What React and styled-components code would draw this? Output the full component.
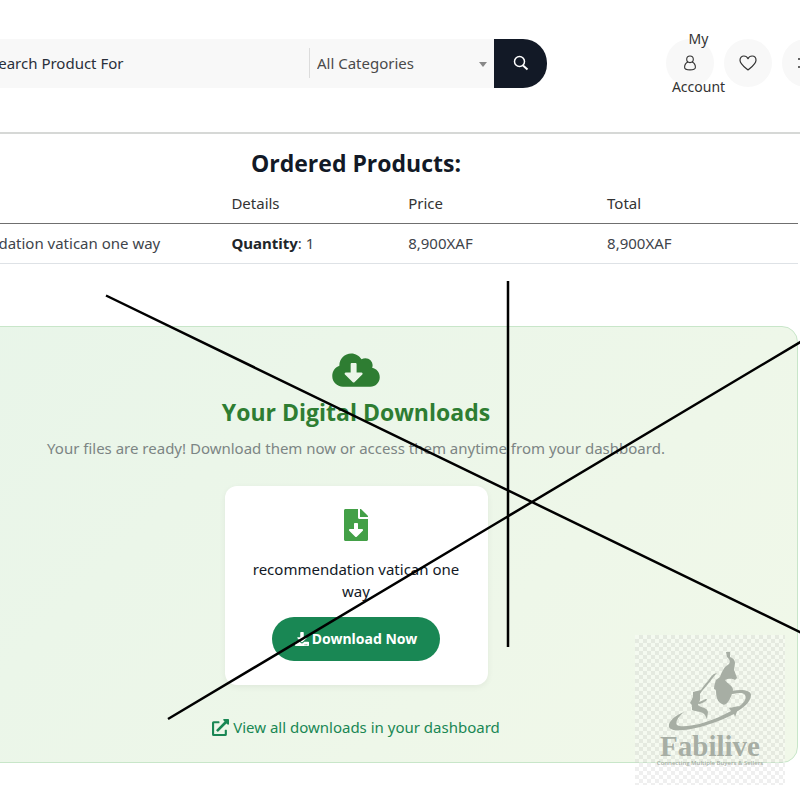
import React from 'react';
import styled, { createGlobalStyle } from 'styled-components';
import { FaCloudDownloadAlt, FaFileDownload, FaDownload, FaExternalLinkAlt } from 'react-icons/fa';

const GlobalStyle = createGlobalStyle`
  *, *::before, *::after { box-sizing: border-box; }
  body {
    margin: 0;
    background: #fff;
    color: #40444b;
    font-family: 'Noto Sans', 'Open Sans', sans-serif;
    font-size: 15px;
    line-height: 24px;
  }
`;

const Page = styled.div`
  position: relative;
  min-height: 100vh;
  overflow: hidden;
`;

const Header = styled.header`
  display: flex;
  align-items: center;
  justify-content: space-between;
  gap: 24px;
  height: 134px;
  padding-bottom: 6px;
  margin-left: -86px;
  border-bottom: 2px solid #d6d8d6;
`;

const SearchForm = styled.form`
  display: flex;
  flex: 0 1 633px;
  height: 49px;
`;

const SearchInput = styled.input`
  flex: 1;
  min-width: 0;
  padding: 0 0 0 76px;
  border: 0;
  background: #f8f8f8;
  color: #292f3a;
  font: inherit;
  &::placeholder { color: #292f3a; opacity: 1; }
`;

const CategoryBox = styled.div`
  position: relative;
  display: flex;
  align-items: center;
  width: 185px;
  background: #f8f8f8;
  &::after {
    content: '';
    position: absolute;
    right: 7px;
    top: 23px;
    border: 4px solid transparent;
    border-top: 5px solid #888;
    border-bottom: 0;
    pointer-events: none;
  }
`;

const CategorySelect = styled.select`
  width: 100%;
  height: 30px;
  padding: 0 0 0 7px;
  border: 0;
  border-left: 1px solid #dcdcdc;
  background: transparent;
  color: #4a4a4a;
  font: inherit;
  appearance: none;
`;

const SearchButton = styled.button`
  display: grid;
  place-items: center;
  width: 53px;
  border: 0;
  padding: 0;
  border-radius: 0 24px 24px 0;
  background: #121926;
  color: #fff;
`;

const Actions = styled.nav`
  display: flex;
  align-items: center;
  gap: 10px;
  flex: none;
  margin-right: -30px;
`;

const RoundLink = styled.a`
  display: flex;
  flex-direction: column;
  align-items: center;
  justify-content: center;
  width: 48px;
  height: 48px;
  border-radius: 50%;
  background: #f8f8f8;
  color: #333;
  text-decoration: none;
  white-space: nowrap;
  svg { flex: none; margin: 4px 0; }
`;

const AccountLabel = styled.span`
  display: block;
  flex: none;
  padding-left: 17px;
  font-size: 14px;
`;

const Main = styled.main`
  margin: 0 2px 0 -86px;
`;

const SectionTitle = styled.h2`
  margin: 0;
  padding: 13px 0 5px;
  color: #121926;
  font-family: 'Open Sans', sans-serif;
  font-size: 23px;
  line-height: 32px;
  font-weight: 700;
  text-align: center;
`;

const OrderTable = styled.table`
  width: 100%;
  table-layout: fixed;
  border-collapse: collapse;
  th, td { padding: 7px 8px 8px; text-align: left; }
  th { font-weight: 400; color: #333; }
  thead tr { border-bottom: 1px solid #6f6f6f; }
  tbody tr { border-bottom: 1px solid #dee2e6; }
  strong { color: #212529; }
`;

const Column = styled.col`
  width: ${(p) => p.$width};
`;

const Downloads = styled.section`
  display: flex;
  flex-direction: column;
  align-items: center;
  margin-top: 62px;
  padding: 24px 24px 23px;
  border: 1px solid #c8e6c9;
  border-radius: 16px;
  background: linear-gradient(135deg, #e8f5e9 0%, #f1f8e9 100%);
  text-align: center;
`;

const CloudIcon = styled(FaCloudDownloadAlt)`
  width: 48px;
  height: 38px;
  color: #2e7d32;
`;

const DownloadsTitle = styled.h3`
  margin: 7px 0 8px;
  color: #2e7d32;
  font-family: 'Open Sans', sans-serif;
  font-size: 23px;
  line-height: 32px;
  font-weight: 700;
`;

const DownloadsText = styled.p`
  margin: 0 0 26px;
  color: #7c8584;
`;

const FileCard = styled.article`
  display: flex;
  flex-direction: column;
  align-items: center;
  width: 263px;
  padding: 23px 24px 24px;
  border-radius: 12px;
  background: #fff;
  box-shadow: 0 2px 6px rgba(0, 0, 0, 0.06);
`;

const FileName = styled.h4`
  margin: 17px 0 15px;
  color: #121926;
  font-size: 15px;
  line-height: 22px;
  font-weight: 400;
`;

const DownloadButton = styled.button`
  display: flex;
  align-items: center;
  justify-content: center;
  gap: 3px;
  width: 168px;
  height: 44px;
  padding: 0;
  border: 0;
  border-radius: 22px;
  background: #198754;
  color: #fff;
  font: inherit;
  font-size: 14px;
  font-weight: 700;
`;

const DashboardLink = styled.a`
  display: flex;
  align-items: center;
  gap: 4px;
  margin-top: 30px;
  color: #198754;
  text-decoration: none;
`;

const PenStrokes = styled.svg`
  position: absolute;
  top: 0;
  left: 0;
  overflow: visible;
  pointer-events: none;
`;

const Watermark = styled.aside`
  position: absolute;
  top: 635px;
  left: 635px;
  width: 150px;
  height: 150px;
  padding-top: 17px;
  display: flex;
  flex-direction: column;
  align-items: center;
  background: repeating-conic-gradient(rgba(205, 205, 205, 0.32) 0 25%, rgba(255, 255, 255, 0.32) 0 50%) 0 0 / 8px 8px;
  color: #a7aea4;
  pointer-events: none;
`;

const BrandName = styled.span`
  font-family: 'Liberation Serif', serif;
  font-size: 29px;
  line-height: 28px;
  font-weight: 700;
`;

const BrandTagline = styled.span`
  font-family: 'Open Sans', sans-serif;
  font-size: 6px;
  line-height: 6px;
  font-weight: 600;
  white-space: nowrap;
`;

export default function App() {
  return (
    <Page>
      <GlobalStyle />
      <Header>
        <SearchForm onSubmit={(e) => e.preventDefault()}>
          <SearchInput type="text" aria-label="Search products" placeholder="Search Product For" />
          <CategoryBox>
            <CategorySelect aria-label="Category">
              <option>All Categories</option>
            </CategorySelect>
          </CategoryBox>
          <SearchButton type="submit" aria-label="Search">
            <svg width="16" height="16" viewBox="0 0 16 16" fill="none" stroke="currentColor" strokeWidth="1.5">
              <circle cx="6.5" cy="6.5" r="5" />
              <path d="M10 10.5l4.5 4" strokeWidth="2" />
            </svg>
          </SearchButton>
        </SearchForm>
        <Actions>
          <RoundLink href="#account">
            <AccountLabel>My</AccountLabel>
            <svg width="14" height="16" viewBox="0 0 14 16" fill="none" stroke="currentColor" strokeWidth="1.1">
              <circle cx="7" cy="4.3" r="3.3" />
              <path d="M4.8 7C2.8 8 1.6 10.1 1.6 12.2c0 1.9 2 2.7 5.4 2.7s5.4-.8 5.4-2.7C12.4 10.1 11.2 8 9.2 7" />
            </svg>
            <AccountLabel>Account</AccountLabel>
          </RoundLink>
          <RoundLink href="#wishlist" aria-label="Wishlist">
            <svg width="18" height="16" viewBox="0 0 18 16" fill="none" stroke="currentColor" strokeWidth="1.2" strokeLinejoin="round">
              <path d="M9 15C6 12.5 1 9 1 5.2 1 2.7 2.7 1 4.9 1 6.8 1 8.2 2 9 3.7 9.8 2 11.2 1 13.1 1 15.3 1 17 2.7 17 5.2 17 9 12 12.5 9 15z" />
            </svg>
          </RoundLink>
          <RoundLink href="#compare" aria-label="Compare">
            <svg width="18" height="16" viewBox="0 0 18 16" fill="none" stroke="currentColor" strokeWidth="1.3">
              <path d="M1 4h16M14 1l3 3-3 3M17 12H1M14 9l3 3-3 3" />
            </svg>
          </RoundLink>
        </Actions>
      </Header>

      <Main>
        <SectionTitle>Ordered Products:</SectionTitle>
        <OrderTable>
          <colgroup>
            <Column $width="35%" />
            <Column $width="20%" />
            <Column $width="22.5%" />
            <Column $width="22.5%" />
          </colgroup>
          <thead>
            <tr>
              <td />
              <th scope="col">Details</th>
              <th scope="col">Price</th>
              <th scope="col">Total</th>
            </tr>
          </thead>
          <tbody>
            <tr>
              <td>recommendation vatican one way</td>
              <td><strong>Quantity</strong>: 1</td>
              <td>8,900XAF</td>
              <td>8,900XAF</td>
            </tr>
          </tbody>
        </OrderTable>

        <Downloads>
          <CloudIcon />
          <DownloadsTitle>Your Digital Downloads</DownloadsTitle>
          <DownloadsText>
            Your files are ready! Download them now or access them anytime from your dashboard.
          </DownloadsText>
          <FileCard>
            <FaFileDownload size={32} color="#43a047" />
            <FileName>recommendation vatican one way</FileName>
            <DownloadButton type="button">
              <FaDownload size={14} />
              Download Now
            </DownloadButton>
          </FileCard>
          <DashboardLink href="#downloads">
            <FaExternalLinkAlt size={17} />
            View all downloads in your dashboard
          </DashboardLink>
        </Downloads>
      </Main>

      <Watermark>
        <svg width="84" height="80" viewBox="0 0 84 80" fill="currentColor">
          <path d="M58 0h4v5c3 1 5 3 5 6l-1 7c1 2 2 5 3 8l-2 2c-4-2-7-1-10 0 2 4 8 5 8 10-1 5-3 9-5 12q-3 4-6 2c-5-2-6-8-6-14l-2-1c0-3 1-6 2-9l4-3c1-4 3-7 5-10l4-3c2-3 0-5-2-7z" />
          <path d="M49 21c-5 1-6 4-9 8-3 3-5 6-7 9l-8 2v5l-3 6 2 2v5c5 2 10 1 13 5l2 4 1-7c-1-5-7-4-10-7l2-5v-6c2-4 6-7 8-10 3-3 4-6 9-11z" />
          <path d="M31 50c4-1 5-3 8-3l-1 2c-3 1-4 3-8 3z" />
          <path d="M16 60C6 64 0 70 1 75c3 8 38 1 65-13l1 3 4-11-10 2 2 3C40 72 14 77 9 73c-2-3 1-8 7-13z" />
          <path d="M64 39c9-2 19-1 19 4 0 7-8 13-15 17l1-4c7-5 10-9 8-13-2-3-7-2-13-1z" />
        </svg>
        <BrandName>Fabilive</BrandName>
        <BrandTagline>Connecting Multiple Buyers &amp; Sellers</BrandTagline>
      </Watermark>

      <PenStrokes width="800" height="800" fill="none" stroke="#000" strokeWidth="2.5" aria-hidden="true">
        <path d="M106 295.5L802 633M508 281V647M168 719L802 341" />
      </PenStrokes>
    </Page>
  );
}
